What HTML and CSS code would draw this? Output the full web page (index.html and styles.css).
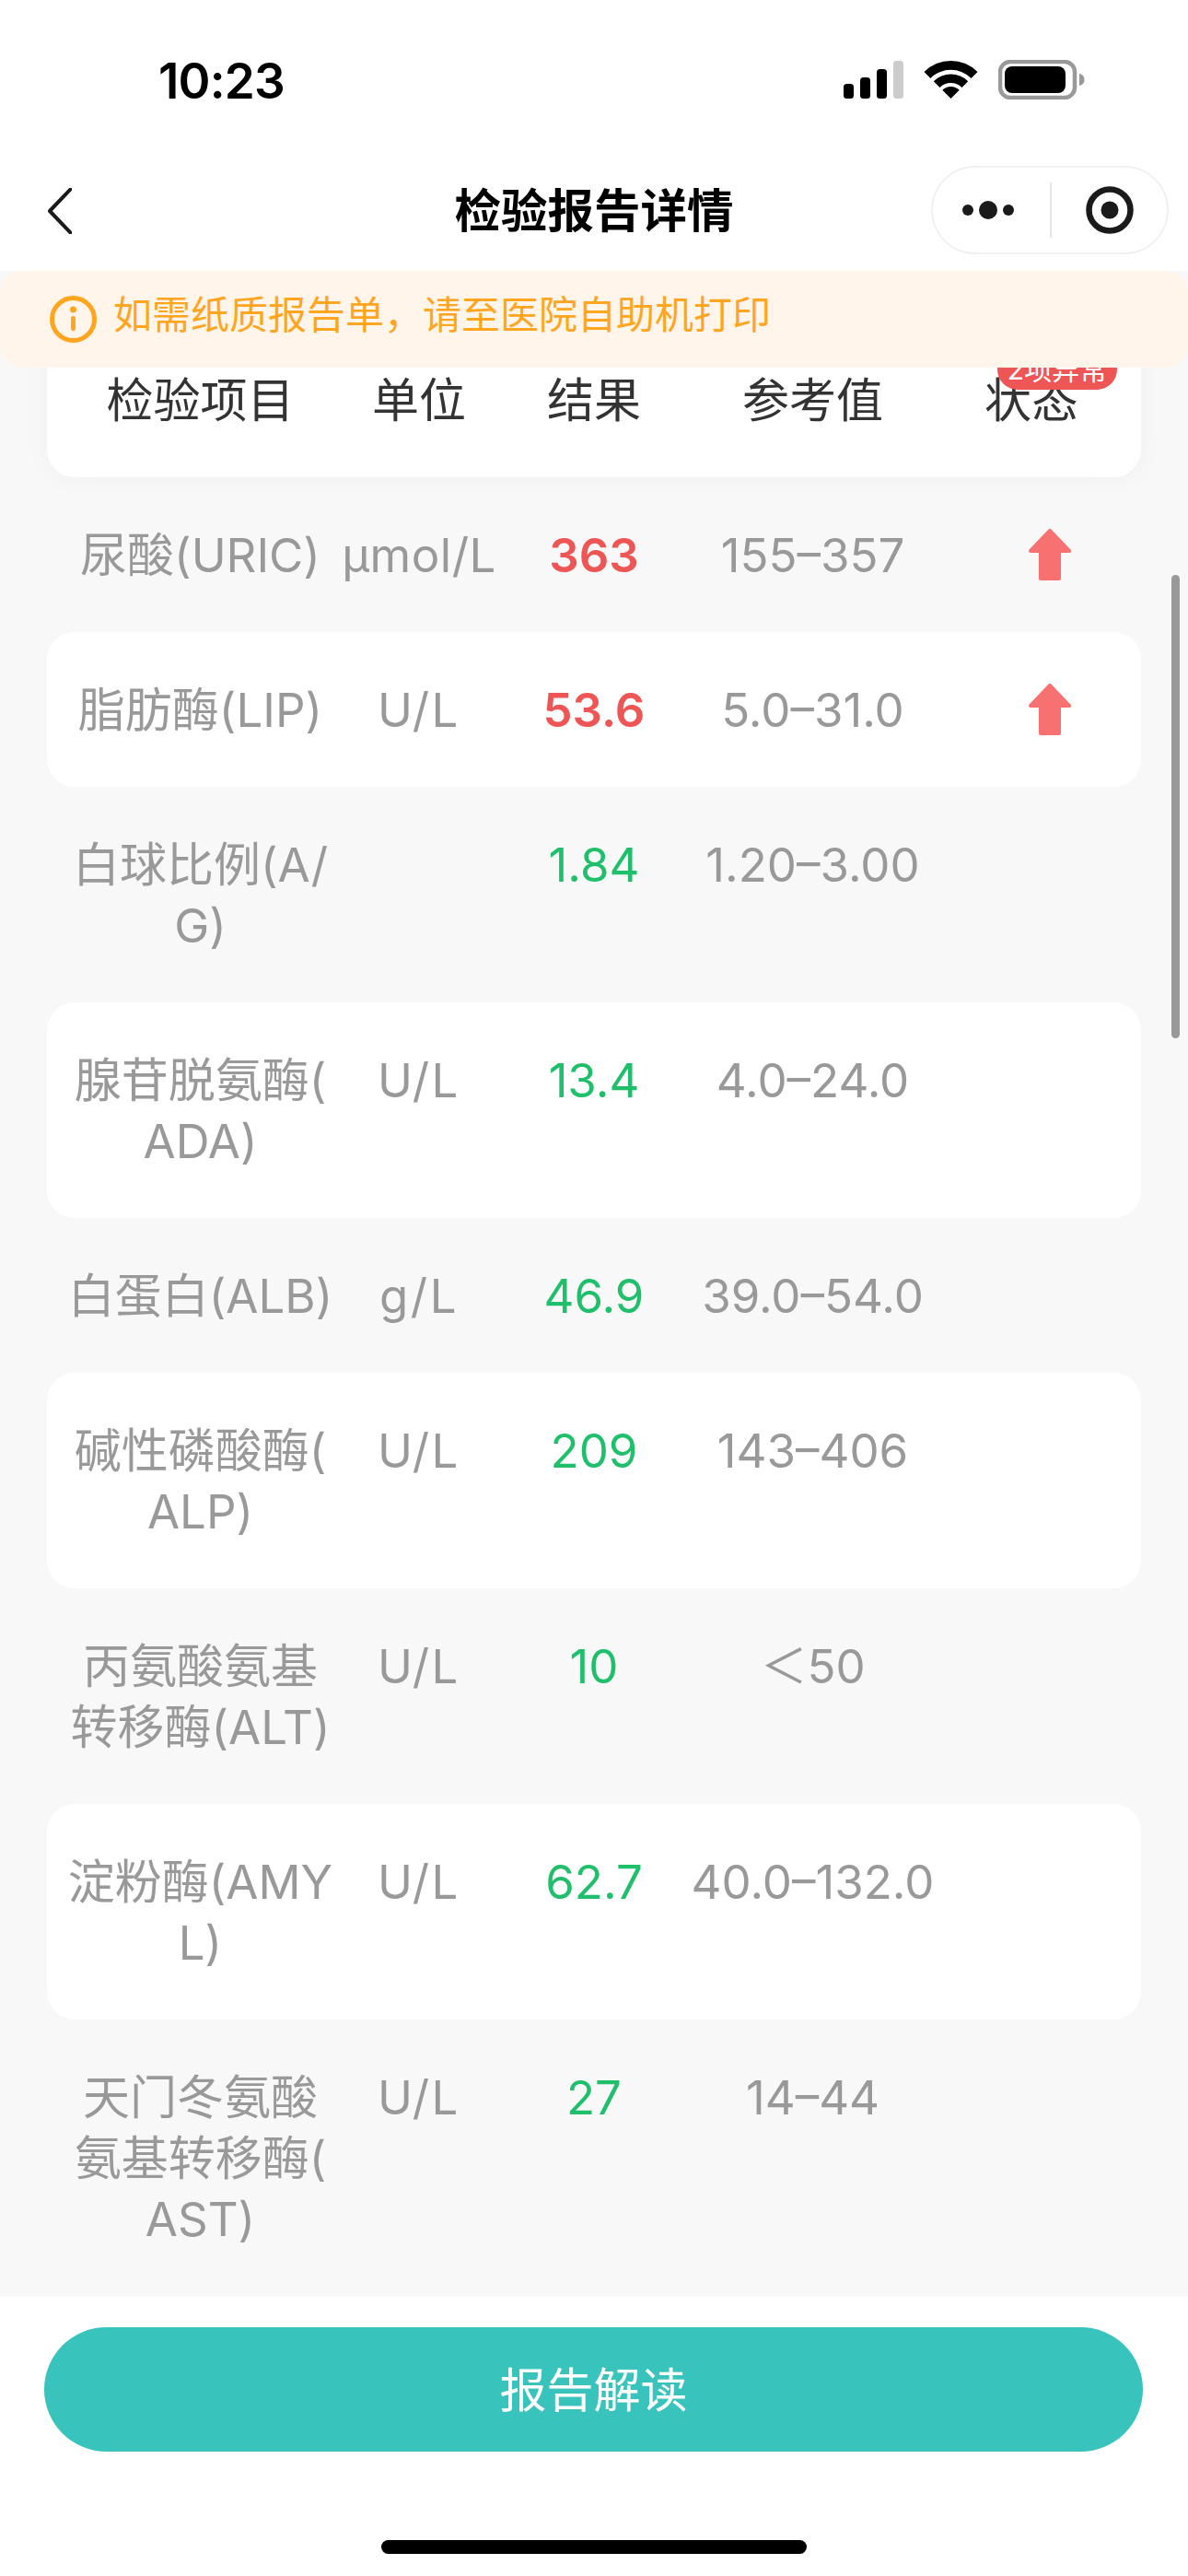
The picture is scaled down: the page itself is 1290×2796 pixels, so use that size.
FILE: index.html
```html
<!DOCTYPE html>
<html lang="zh-CN">
<head>
<meta charset="utf-8">
<title>检验报告详情</title>
<link rel="stylesheet" href="styles.css">
</head>
<body>
<div class="page">
  <header class="top">
    <div class="status">
      <span class="time">10:23</span>
      <div class="status-icons">
        <svg class="signal" viewBox="0 0 65 41"><rect x="0" y="25" width="11" height="16" rx="3.5"/><rect x="18" y="18" width="11" height="23" rx="3.5"/><rect x="36" y="9" width="11" height="32" rx="3.5"/><rect class="signal-off" x="54" y="0" width="11" height="41" rx="3.5"/></svg>
        <svg class="wifi" viewBox="0 0 57 42"><path d="M-.5 13A41 41 0 0 1 57.500 13L50.600 19.900A31.300 31.300 0 0 0 6.400 19.900Z"/><path d="M9.800 23.300A26.500 26.500 0 0 1 47.200 23.300L40.500 30A17 17 0 0 0 16.500 30Z"/><path d="M19.300 32.800A13 13 0 0 1 37.700 32.800L28.500 42Z"/></svg>
        <svg class="battery" viewBox="0 0 94 43"><rect class="battery-shell" x="2" y="2" width="81" height="39" rx="11"/><rect x="7" y="7" width="66" height="29" rx="8"/><path class="battery-cap" d="M88 15c3 .5 5.500 3 5.500 6.500S91 27.500 88 28Z"/></svg>
      </div>
    </div>
    <nav class="nav">
      <svg class="back" viewBox="0 0 26 50"><path d="M25 1 2 25l23 24"/></svg>
      <h1 class="title">检验报告详情</h1>
      <div class="capsule">
        <svg class="capsule-more" viewBox="0 0 66 22"><circle cx="6" cy="11" r="6"/><circle cx="28" cy="11" r="10"/><circle cx="50" cy="11" r="6"/></svg>
        <i class="capsule-line"></i>
        <svg class="capsule-close" viewBox="0 0 52 52"><circle class="ring" cx="26" cy="26" r="22.500"/><circle cx="26" cy="26" r="9.500"/></svg>
      </div>
    </nav>
  </header>

  <main class="main">
    <div class="notice">
      <svg class="notice-icon" viewBox="0 0 51 51"><circle class="notice-ring" cx="25.500" cy="25.500" r="23"/><circle class="notice-dot" cx="25.500" cy="15" r="3.500"/><rect class="notice-dot" x="23" y="22" width="5" height="16" rx="2.500"/></svg>
      <span class="notice-text">如需纸质报告单，请至医院自助机打印</span>
    </div>
    <div class="list">
      <div class="row row-head">
        <div>检验项目</div><div>单位</div><div>结果</div><div>参考值</div><div>状态</div>
        <span class="badge">2项异常</span>
      </div>
      <div class="row">
        <div class="name">尿酸(URIC)</div><div class="unit-long">μmol/L</div><div class="high">363</div><div>155–357</div>
        <div class="flag"><svg class="arrow" viewBox="0 0 46 56"><path d="M23 2 44 24H33V54H13V24H2Z"/></svg></div>
      </div>
      <div class="row row-card">
        <div class="name">脂肪酶(LIP)</div><div class="unit">U/L</div><div class="high">53.6</div><div>5.0–31.0</div>
        <div class="flag"><svg class="arrow" viewBox="0 0 46 56"><path d="M23 2 44 24H33V54H13V24H2Z"/></svg></div>
      </div>
      <div class="row">
        <div class="name">白球比例(A/G)</div><div class="unit"></div><div class="ok">1.84</div><div>1.20–3.00</div><div></div>
      </div>
      <div class="row row-card">
        <div class="name">腺苷脱氨酶(ADA)</div><div class="unit">U/L</div><div class="ok">13.4</div><div>4.0–24.0</div><div></div>
      </div>
      <div class="row">
        <div class="name">白蛋白(ALB)</div><div class="unit">g/L</div><div class="ok">46.9</div><div>39.0–54.0</div><div></div>
      </div>
      <div class="row row-card">
        <div class="name">碱性磷酸酶(ALP)</div><div class="unit">U/L</div><div class="ok">209</div><div>143–406</div><div></div>
      </div>
      <div class="row">
        <div class="name">丙氨酸氨基转移酶(ALT)</div><div class="unit">U/L</div><div class="ok">10</div><div>＜50</div><div></div>
      </div>
      <div class="row row-card">
        <div class="name">淀粉酶(AMYL)</div><div class="unit">U/L</div><div class="ok">62.7</div><div>40.0–132.0</div><div></div>
      </div>
      <div class="row">
        <div class="name">天门冬氨酸氨基转移酶(AST)</div><div class="unit">U/L</div><div class="ok">27</div><div>14–44</div><div></div>
      </div>
    </div>
    <i class="scrollbar"></i>
  </main>

  <footer class="footer">
    <button class="action">报告解读</button>
    <i class="home"></i>
  </footer>
</div>
</body>
</html>
```

FILE: styles.css
```css
* { box-sizing: border-box; }
html, body { margin: 0; padding: 0; background: #fff; }
body { font-family: "Inter", "Noto Sans CJK SC", sans-serif; }
.page { height: 100vh; display: flex; flex-direction: column; overflow: hidden; }

.top { flex: none; height: 294px; background: #fff; }
.status { height: 164px; padding: 65px 112px 0 172px; display: flex; justify-content: space-between; align-items: flex-start; }
.time { font-size: 53px; line-height: 46px; font-weight: 600; color: #000; letter-spacing: -.8px; }
.status-icons { display: flex; align-items: flex-start; gap: 23px; }
.signal { width: 65px; height: 41px; margin-top: 1px; fill: #000; }
.signal-off { fill: #ccc; }
.wifi { width: 57px; height: 42px; fill: #000; overflow: visible; }
.battery { width: 94px; height: 43px; fill: #000; }
.battery-shell { fill: none; stroke: #999; stroke-width: 4.500px; }
.battery-cap { fill: #999; }

.nav { height: 130px; display: grid; grid-template-columns: 1fr auto 1fr; align-items: center; }
.back { width: 26px; height: 50px; margin-left: 52px; fill: none; stroke: #1a1a1a; stroke-width: 4px; stroke-linecap: round; stroke-linejoin: round; }
.title { margin: 0; font-size: 50.500px; line-height: 66px; font-weight: 600; color: #000; }
.capsule { justify-self: end; width: 258px; height: 96px; margin: -2px 21px 0 0; border: 2px solid #f1f1f1; border-radius: 48px; display: flex; align-items: center; padding-left: 32px; }
.capsule-more { width: 66px; height: 22px; fill: #1a1a1a; }
.capsule-line { width: 2px; height: 60px; margin-left: 29px; background: #e6e6e6; }
.capsule-close { width: 52px; height: 52px; margin-left: 37px; fill: #1a1a1a; }
.capsule-close .ring { fill: none; stroke: #1a1a1a; stroke-width: 6.500px; }

.main { flex: 1; min-height: 0; position: relative; overflow: hidden; background: #f8f8f8; }
.notice { position: absolute; top: 0; left: 0; right: 0; z-index: 2; height: 105px; padding-left: 54px; display: flex; align-items: center; gap: 18px; border-radius: 24px; background: #fff5eb; color: #ffa51f; font-size: 42px; }
.notice-icon { width: 51px; height: 51px; flex: none; }
.notice-text { line-height: 60px; margin-top: -10px; }
.notice-ring { fill: none; stroke: #ffa51f; stroke-width: 5px; }
.notice-dot { fill: #ffa51f; }

.list { padding-top: 56px; }
.row { position: relative; margin: 0 51px; padding: 52px 24px 50px; display: grid; grid-template-columns: 25% 16.667% 16.667% 25% 16.667%; font-size: 51px; line-height: 66px; color: #999; text-align: center; word-break: break-all; line-break: anywhere; }
.row-card { background: #fff; border-radius: 30px; }
.row-head { background: #fff; border-radius: 30px; color: #333; box-shadow: 0 0 30px rgba(0, 0, 0, .035); }
.name { margin: 0 -4px; }
.unit { letter-spacing: 2.500px; }
.unit-long { letter-spacing: .5px; }
.high { color: #ee5555; font-weight: 600; }
.ok { color: #1fbf6b; font-weight: 400; }
.flag { display: flex; justify-content: center; }
.arrow { width: 46px; height: 56px; margin: 4px 0 0 40px; fill: #f87171; stroke: #f87171; stroke-width: 4px; stroke-linejoin: round; }
.badge { position: absolute; top: 29px; right: 26px; width: 130px; height: 44px; border-radius: 24px; background: #ee5555; color: #fff; font-size: 30px; line-height: 44px; text-align: center; }
.scrollbar { position: absolute; top: 330px; right: 9px; width: 9px; height: 503px; border-radius: 5px; background: #999; }

.footer { flex: none; height: 303px; padding: 33px 49px 0 48px; background: #fff; display: flex; flex-direction: column; align-items: center; }
.action { width: 100%; height: 135px; flex: none; border: 0; padding: 0 0 6px; border-radius: 68px; background: #38c3bd; color: #fff; font: inherit; font-size: 51px; }
.home { width: 462px; height: 15px; flex: none; margin-top: 96px; border-radius: 8px; background: #000; }
```
